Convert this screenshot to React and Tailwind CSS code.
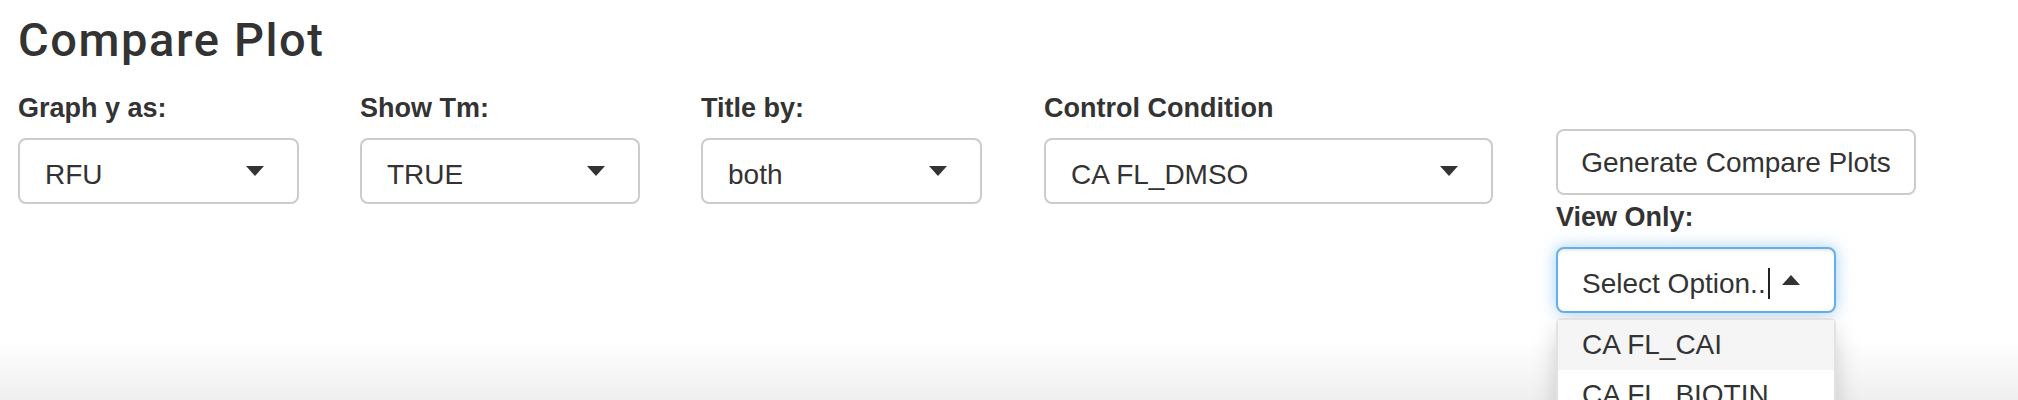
import React from 'react';

const FONT = "font-['Liberation_Sans','Helvetica_Neue',Arial,sans-serif]";

const DownCaret = () => (
  <span className="h-0 w-0 border-x-[9px] border-t-[10px] border-x-transparent border-t-[#333]" />
);

const UpCaret = () => (
  <span className="h-0 w-0 border-x-[9px] border-b-[10px] border-x-transparent border-b-[#333]" />
);

const Label = ({ children }) => (
  <label className="block h-[30px] text-[27px] font-bold leading-[30px] text-[#333]">{children}</label>
);

// closed select box (selectize look)
const SelectBox = ({ value, width }) => (
  <div
    className={`mt-[15px] flex h-[66px] items-center justify-between rounded-[8px] border-2 border-[#cccccc] bg-white pl-[25px] pr-[33px] ${width}`}
  >
    <span className="mt-[6px] text-[28px] leading-[31px] text-[#333]">{value}</span>
    <DownCaret />
  </div>
);

const options = ['CA FL_CAI', 'CA FL_BIOTIN', 'CA FL_DMSO', 'CA FL_PEG'];

export default function App() {
  return (
    <div
      className={`relative h-[400px] w-full overflow-hidden bg-linear-to-b from-white from-85% to-[#efefef] text-[#333] ${FONT}`}
    >
      <div className="pl-[18px] pt-[16px]">
        <h3 className="font-['Roboto','Liberation_Sans',sans-serif] text-[47px] font-medium leading-none tracking-[1.6px]">
          Compare Plot
        </h3>

        <div className="mt-[30px] flex items-start">
          <div className="w-[342px]">
            <Label>Graph y as:</Label>
            <SelectBox value="RFU" width="w-[281px]" />
          </div>

          <div className="w-[341px]">
            <Label>Show Tm:</Label>
            <SelectBox value="TRUE" width="w-[280px]" />
          </div>

          <div className="w-[343px]">
            <Label>Title by:</Label>
            <SelectBox value="both" width="w-[281px]" />
          </div>

          <div className="w-[512px]">
            <Label>Control Condition</Label>
            <SelectBox value="CA FL_DMSO" width="w-[449px]" />
          </div>

          {/* button + view only picker */}
          <div className="w-[380px] pt-[36px]">
            <button className="flex h-[66px] w-[360px] items-center justify-center rounded-[8px] border-2 border-[#cccccc] bg-white text-[28px] leading-[31px] text-[#333]">
              Generate Compare Plots
            </button>

            <div className="mt-[7px]">
              <Label>View Only:</Label>
            </div>

            <div className="relative mt-[15px] w-[280px]">
              <div className="flex h-[66px] items-center justify-between rounded-[8px] border-2 border-[#66afe9] bg-white pl-[24px] pr-[34px] shadow-[inset_0_2px_2px_rgba(0,0,0,0.075),0_0_16px_rgba(102,175,233,0.6)]">
                <span className="mt-[6px] flex items-center text-[28px] leading-[31px] text-[#333]">
                  Select Option..
                  <span className="ml-[2px] inline-block h-[31px] w-[2px] bg-[#222]" />
                </span>
                <UpCaret />
              </div>

              <div className="absolute left-0 top-[71px] z-10 w-[280px] rounded-t-[6px] border-2 border-[#e2e2e2] bg-white shadow-[0_12px_24px_rgba(0,0,0,0.18)]">
                {options.map((opt, i) => (
                  <div
                    key={opt}
                    className={`h-[50px] pl-[24px] text-[28px] leading-[50px] text-[#333] ${i === 0 ? 'bg-[#f5f5f5]' : 'bg-white'}`}
                  >
                    {opt}
                  </div>
                ))}
              </div>
            </div>
          </div>
        </div>
      </div>
    </div>
  );
}
